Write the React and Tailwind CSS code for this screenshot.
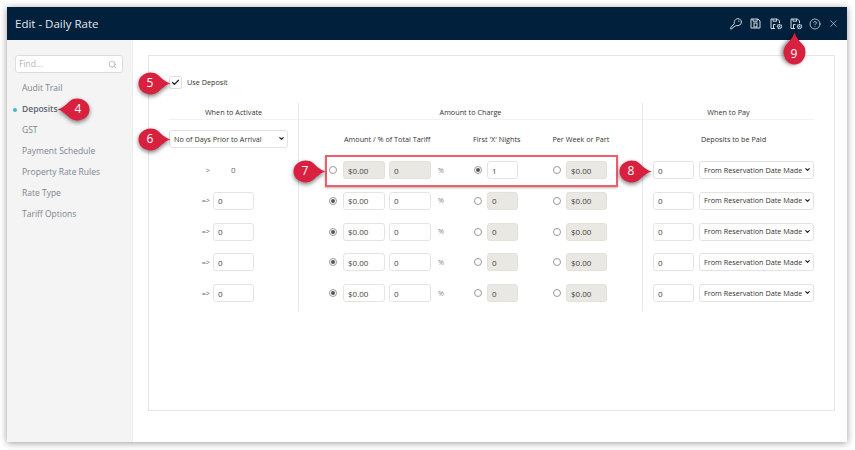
import React from "react";
import { CircleHelp, X, Search, Check, ChevronDown } from "lucide-react";

const rowItems = [
  { first: true, mode: "nights", nights: "1" },
  { mode: "amount", nights: "0" },
  { mode: "amount", nights: "0" },
  { mode: "amount", nights: "0" },
  { mode: "amount", nights: "0" },
];

const navItems = ["Audit Trail", "Deposits", "GST", "Payment Schedule", "Property Rate Rules", "Rate Type", "Tariff Options"];

// dir: which way the tip of the marker points
const Pin = ({ label, className, dir }) => {
  const shape = dir === "up" ? "rotate-90" : dir === "right" ? "-scale-x-100" : "";
  const text =
    dir === "up"
      ? "w-full translate-y-[5px]"
      : dir === "right"
        ? "w-[24px]"
        : "w-[24px] ml-[9px]";
  return (
    <div className={`absolute w-[33px] h-[23px] flex items-center ${className}`}>
      <svg
        viewBox="0 0 33 23"
        className={`absolute inset-0 w-[33px] h-[23px] overflow-visible drop-shadow-[0_2px_2px_rgba(0,0,0,0.5)] ${shape}`}
      >
        <path d="M0.5 11.5 C6 10 10 5.5 13 3 C20 -2.5 32.5 2 32.5 11.5 C32.5 21 20 25.5 13 20 C10 17.5 6 13 0.5 11.5 Z" fill="#d8203f" />
      </svg>
      <span className={`relative text-white text-[12px] leading-none text-center ${text}`}>{label}</span>
    </div>
  );
};

const Field = ({ value, off, className }) => (
  <input
    readOnly
    value={value}
    className={`h-[18px] rounded-[3px] border px-[4px] text-[8px] text-[#444] outline-none ${
      off ? "bg-[#e9e8e2] border-[#e2e1dc]" : "bg-white border-[#e4e4e4]"
    } ${className}`}
  />
);

const Dropdown = ({ label, className }) => (
  <div className={`relative h-[18px] ${className}`}>
    <select className="w-full h-full appearance-none bg-white border border-[#e3e3e3] rounded-[3px] pl-[4px] pr-[11px] text-[7.25px] text-[#333] outline-none">
      <option>{label}</option>
    </select>
    <ChevronDown size={7} color="#222222" strokeWidth={4} className="absolute right-[3px] top-[5px] pointer-events-none" />
  </div>
);

const Radio = ({ on, className }) => (
  <span className={`flex items-center justify-center w-[8px] h-[8px] rounded-full border border-[#999] bg-white shrink-0 ${className}`}>
    {on && <span className="w-[4px] h-[4px] rounded-full bg-[#555]" />}
  </span>
);

const KeyIcon = () => (
  <svg viewBox="0 0 12 12" className="w-[12px] h-[12px]" fill="none" stroke="#d5dbe2" strokeWidth="1">
    <path d="M6.2 7.6 L5.4 7.9 L1.2 11 L0.8 11.2 L0.8 9.4 L4.4 5.6 C3.6 3 5.6 0.7 8 0.7 C10 0.7 11.4 2.2 11.4 4 C11.4 6.4 8.8 8.4 6.2 7.6 Z" />
    <circle cx="8.8" cy="3.2" r="0.6" fill="#d5dbe2" stroke="none" />
  </svg>
);

const Floppy = () => (
  <svg viewBox="0 0 11 11" className="w-[11px] h-[11px]" fill="none" stroke="#d5dbe2" strokeWidth="1">
    <path d="M1 1h7l2 2v7h-9z" />
    <path d="M3 1v2.2h4.2V1" />
    <rect x="4" y="5" width="3" height="4" />
  </svg>
);

const FileGear = () => (
  <svg viewBox="0 0 13 12" className="w-[13px] h-[12px]" fill="none" stroke="#d5dbe2" strokeWidth="1">
    <path d="M5 10.5H1V1h6.5L9.5 3v2" />
    <path d="M3 1v2.2h3.6V1" />
    <path d="M3.5 10V6.5h2" />
    <circle cx="9.5" cy="8.5" r="2" strokeWidth="1.4" strokeDasharray="1.2 0.4" />
    <circle cx="9.5" cy="8.5" r="0.7" fill="#d5dbe2" stroke="none" />
  </svg>
);

export default function App() {
  return (
    <div className="w-[855px] h-[450px] bg-white pt-[7px] pl-[7px] font-['Open_Sans',sans-serif] overflow-hidden">
      <div className="relative w-[840px] h-[435px] bg-white flex flex-col shadow-[0_1px_7px_rgba(0,0,0,0.4)]">
        <header className="h-[33px] bg-[#00203c] flex items-center justify-between px-[8px] shrink-0">
          <span className="text-[#e3e7ec] text-[11.5px]">Edit - Daily Rate</span>
          <div className="flex items-center">
            <KeyIcon />
            <span className="ml-[8px]"><Floppy /></span>
            <span className="ml-[9px]"><FileGear /></span>
            <span className="ml-[7px]"><FileGear /></span>
            <CircleHelp size={12} color="#dde2e8" strokeWidth={1.5} className="ml-[6px]" />
            <X size={11} color="#dde2e8" strokeWidth={1.4} className="ml-[7px]" />
          </div>
        </header>

        <div className="flex flex-1">
          <aside className="w-[126px] bg-[#f4f4f4] border-r border-[#eeeeee] pt-[15px] pl-[8px] shrink-0">
            <div className="w-[108px] h-[18px] bg-white border border-[#dddddd] rounded-[3px] flex items-center justify-between pl-[3px] pr-[5px]">
              <span className="text-[8.5px] text-[#b5b5b5]">Find...</span>
              <Search size={9} color="#aaaaaa" />
            </div>
            <nav className="mt-[5px] flex flex-col">
              {navItems.map((item) => (
                <div key={item} className="relative h-[21px] flex items-center pl-[7px] text-[8.5px] text-[#7d8590]">
                  {item === "Deposits" && <span className="absolute left-[-2px] w-[4px] h-[4px] rounded-full bg-[#3fb8d6]" />}
                  <span className={item === "Deposits" ? "text-[#5c6570] font-semibold" : ""}>{item}</span>
                </div>
              ))}
            </nav>
          </aside>

          <main className="flex-1 pt-[15px] pl-[15px]">
            <div className="w-[687px] h-[356px] border border-[#e6e6e6] pl-[20px] pt-[20px]">
              <label className="flex items-center h-[13px]">
                <span className="w-[13px] h-[13px] border border-[#e0e0e0] rounded-[2px] bg-white flex items-center justify-center">
                  <Check size={9} color="#222222" strokeWidth={3.5} />
                </span>
                <span className="ml-[5px] text-[7.25px] text-[#333]">Use Deposit</span>
              </label>

              <div className="flex mt-[14px] w-[645px] text-[7.25px] text-[#333]">
                {/* When to Activate */}
                <section className="w-[129px]">
                  <h3 className="h-[17px] pt-[4px] border-b border-[#f2f2f2] text-center font-normal">When to Activate</h3>
                  <div className="mt-[10px] h-[18px]">
                    <Dropdown label="No of Days Prior to Arrival" className="w-[119px]" />
                  </div>
                  <div className="mt-[13px] flex flex-col gap-[12.8px]">
                    {rowItems.map((row, i) => (
                      <div key={i} className="h-[18px] flex items-center text-[#666]">
                        {row.first ? (
                          <>
                            <span className="w-[41px] text-right">&gt;</span>
                            <span className="ml-[21px] text-[8px]">0</span>
                          </>
                        ) : (
                          <>
                            <span className="w-[41px] text-right">=&gt;</span>
                            <Field value="0" className="ml-[3px] w-[41px]" />
                          </>
                        )}
                      </div>
                    ))}
                  </div>
                </section>

                {/* Amount to Charge */}
                <section className="relative w-[344px] h-[208px] border-l border-[#e6e6e6]">
                  <h3 className="h-[17px] pt-[4px] border-b border-[#f2f2f2] text-center font-normal">Amount to Charge</h3>
                  <div className="mt-[10px] h-[18px] flex items-center">
                    <span className="w-[100px] ml-[45px] whitespace-nowrap">Amount / % of Total Tariff</span>
                    <span className="ml-[29px] whitespace-nowrap">First 'X' Nights</span>
                    <span className="ml-[32px] whitespace-nowrap">Per Week or Part</span>
                  </div>
                  <div className="mt-[13px] flex flex-col gap-[12.8px]">
                    {rowItems.map((row, i) => (
                      <div key={i} className="h-[18px] flex items-center">
                        <Radio on={row.mode === "amount"} className="ml-[30px]" />
                        <Field value="$0.00" off={row.mode !== "amount"} className="ml-[6px] w-[42px]" />
                        <Field value="0" off={row.mode !== "amount"} className="ml-[4px] w-[42px]" />
                        <span className="ml-[7px] w-[7px] text-[#888]">%</span>
                        <Radio on={row.mode === "nights"} className="ml-[29px]" />
                        <Field value={row.nights} off={row.mode !== "nights"} className="ml-[5px] w-[31px]" />
                        <Radio className="ml-[35px]" />
                        <Field value="$0.00" off className="ml-[5px] w-[41px]" />
                      </div>
                    ))}
                  </div>
                  <div className="absolute left-[26px] top-[52px] w-[293px] h-[32px] border-2 border-[#ee5f68] shadow-[0_1px_2px_rgba(0,0,0,0.3)]" />
                </section>

                {/* When to Pay */}
                <section className="w-[172px] h-[208px] border-l border-[#e6e6e6]">
                  <h3 className="h-[17px] pt-[4px] border-b border-[#f2f2f2] text-center font-normal">When to Pay</h3>
                  <div className="mt-[10px] h-[18px] pl-[10px] flex items-center justify-center">Deposits to be Paid</div>
                  <div className="mt-[13px] flex flex-col gap-[12.8px]">
                    {rowItems.map((_, i) => (
                      <div key={i} className="h-[18px] flex items-center pl-[10px]">
                        <Field value="0" className="w-[41px]" />
                        <Dropdown label="From Reservation Date Made" className="ml-[5px] w-[115px]" />
                      </div>
                    ))}
                  </div>
                </section>
              </div>
            </div>
          </main>
        </div>

        <Pin label="4" dir="left" className="left-[50px] top-[90.5px]" />
        <Pin label="5" dir="right" className="left-[131px] top-[64.5px]" />
        <Pin label="6" dir="right" className="left-[131px] top-[120.5px]" />
        <Pin label="7" dir="right" className="left-[286px] top-[152.5px]" />
        <Pin label="8" dir="right" className="left-[612px] top-[152.5px]" />
        <Pin label="9" dir="up" className="left-[770.5px] top-[30px]" />
      </div>
    </div>
  );
}
